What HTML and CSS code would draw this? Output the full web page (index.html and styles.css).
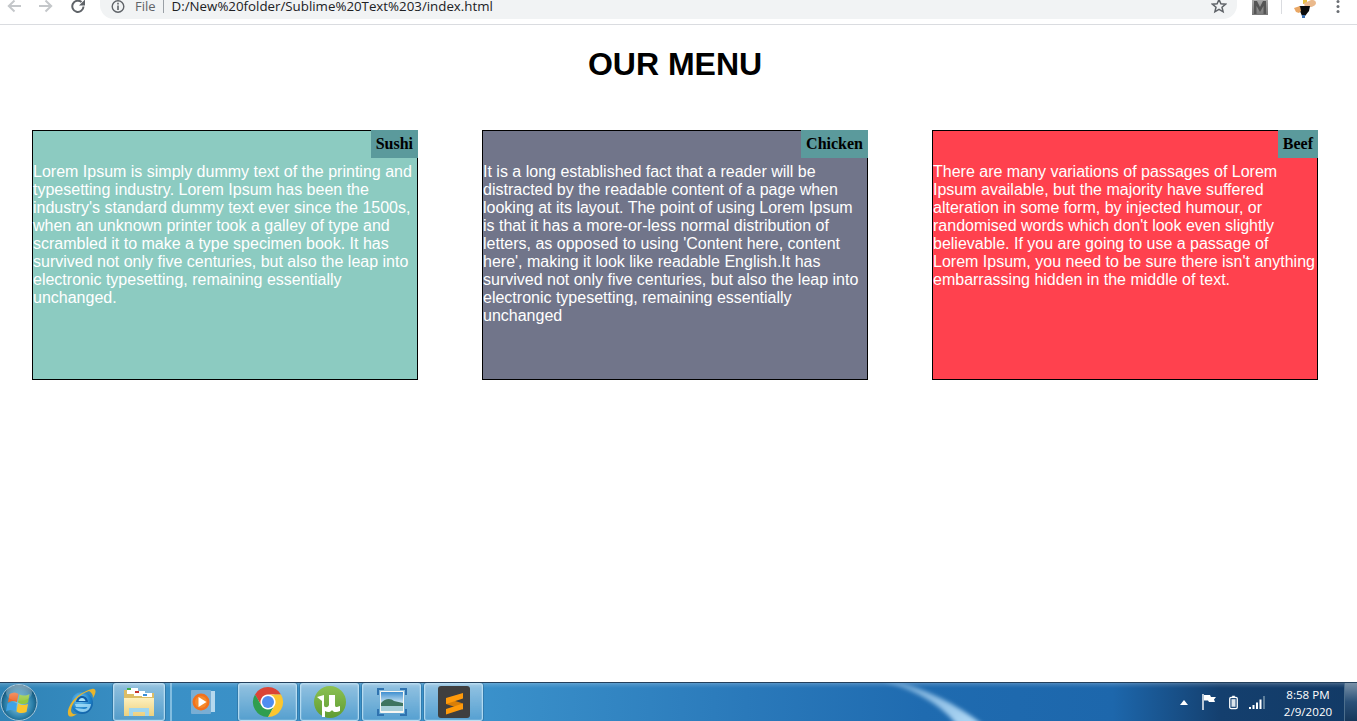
FILE: index.html
```html
<!DOCTYPE html>
<html lang="en">
<head>
<meta charset="utf-8">
<title>Our Menu</title>
<link rel="stylesheet" href="styles.css">
</head>
<body>
<div class="screen">
  <header class="toolbar">
    <div class="nav">
      <svg class="nav-icon" viewBox="0 0 16 14"><path d="M15 6H3M8.500 .5 2.800 6l5.700 5.500" fill="none" stroke="#c4c7ca" stroke-width="2"/></svg>
      <svg class="nav-icon" viewBox="0 0 16 14"><path d="M1 6h12M7.500 .5 13.200 6l-5.700 5.500" fill="none" stroke="#c4c7ca" stroke-width="2"/></svg>
      <svg class="nav-icon" viewBox="0 0 16 14"><path d="M13.500 6.500A5.600 5.600 0 1 1 11.500 2" fill="none" stroke="#5f6368" stroke-width="2"/><path d="M9 5.500h6V-.5z" fill="#5f6368"/></svg>
    </div>
    <div class="omnibox">
      <svg class="info" viewBox="0 0 14 14"><circle cx="7" cy="6.500" r="5.800" fill="none" stroke="#5f6368" stroke-width="1.400"/><path d="M6.200 5.500h1.600v4.500H6.200zM6.200 2.800h1.600v1.600H6.200z" fill="#5f6368"/></svg>
      <span class="scheme">File</span>
      <span class="divider"></span>
      <span class="url">D:/New%20folder/Sublime%20Text%203/index.html</span>
      <svg class="star" viewBox="0 0 16 16"><path d="M8 1.500l1.900 4.300 4.600.4-3.500 3 1.100 4.600L8 11.400l-4.100 2.400L5 9.200l-3.500-3 4.600-.4z" fill="none" stroke="#5f6368" stroke-width="1.500"/></svg>
    </div>
    <div class="extensions">
      <svg class="ext-m" viewBox="0 0 16 15">
        <defs><linearGradient id="mg" x1="0" y1="0" x2="0" y2="1"><stop offset="0" stop-color="#a9a9a9"/><stop offset="1" stop-color="#777"/></linearGradient></defs>
        <rect width="16" height="15" fill="url(#mg)"/><path d="M2 14V1h3l3 6 3-6h3v13h-2.500V6L8 12 4.500 6v8z" fill="#555"/>
      </svg>
      <span class="ext-sep"></span>
      <svg class="avatar" viewBox="0 0 22 18">
        <path d="M9 0h4v4H9z" fill="#e8c040"/>
        <path d="M10 3c3-1 5-2 7-3 3-.5 5 1 5 3 0 2-3 4-6 4l-5 1z" fill="#eab98c"/>
        <path d="M5 6h11l-1 5-4 5H8L6 11z" fill="#0b0b0b"/>
        <path d="M0 8l6-2 1 5-2 2-3-1z" fill="#e9a765"/>
        <path d="M8 15h3v3H8z" fill="#3a6fb0"/>
      </svg>
      <svg class="kebab" viewBox="0 0 4 14"><circle cx="2" cy="1.500" r="1.500" fill="#6a6e73"/><circle cx="2" cy="6.500" r="1.500" fill="#6a6e73"/><circle cx="2" cy="11.500" r="1.500" fill="#6a6e73"/></svg>
    </div>
  </header>

  <main class="page">
    <h1 class="title">OUR MENU</h1>
    <section class="cards">
      <article class="card card-sushi">
        <h2 class="label">Sushi</h2>
        <p class="text">Lorem Ipsum is simply dummy text of the printing and typesetting industry. Lorem Ipsum has been the industry's standard dummy text ever since the 1500s, when an unknown printer took a galley of type and scrambled it to make a type specimen book. It has survived not only five centuries, but also the leap into electronic typesetting, remaining essentially unchanged.</p>
      </article>
      <article class="card card-chicken">
        <h2 class="label">Chicken</h2>
        <p class="text">It is a long established fact that a reader will be distracted by the readable content of a page when looking at its layout. The point of using Lorem Ipsum is that it has a more-or-less normal distribution of letters, as opposed to using 'Content here, content here', making it look like readable English.It has survived not only five centuries, but also the leap into electronic typesetting, remaining essentially unchanged</p>
      </article>
      <article class="card card-beef">
        <h2 class="label">Beef</h2>
        <p class="text">There are many variations of passages of Lorem Ipsum available, but the majority have suffered alteration in some form, by injected humour, or randomised words which don't look even slightly believable. If you are going to use a passage of Lorem Ipsum, you need to be sure there isn't anything embarrassing hidden in the middle of text.</p>
      </article>
    </section>
  </main>

  <footer class="taskbar">
    <svg class="streak" viewBox="0 0 110 39">
      <defs><filter id="soft" x="-20%" y="-20%" width="140%" height="140%"><feGaussianBlur stdDeviation="2"/></filter>
      <linearGradient id="sg" x1="0" y1="0" x2="1" y2="1"><stop offset="0" stop-color="#6fa6d4"/><stop offset="1" stop-color="#b4dcf8"/></linearGradient></defs>
      <path d="M8 -2C40 4 75 22 100 42H74C60 24 36 8 0 -2z" fill="url(#sg)" filter="url(#soft)"/>
    </svg>
    <div class="orb">
      <svg viewBox="0 0 38 38" width="38" height="38">
        <defs>
          <radialGradient id="orbg" cx=".5" cy=".55" r=".55"><stop offset="0" stop-color="#8fd0ea"/><stop offset=".7" stop-color="#2a7ea8"/><stop offset="1" stop-color="#0f4a6c"/></radialGradient>
          <linearGradient id="glass" x1="0" y1="0" x2="0" y2="1"><stop offset="0" stop-color="#fff" stop-opacity=".45"/><stop offset="1" stop-color="#fff" stop-opacity=".05"/></linearGradient>
        </defs>
        <circle cx="19" cy="19.500" r="18" fill="url(#orbg)" stroke="#a9c9dc" stroke-width="1"/>
        <path d="M9.500 11c3.500-2 6.500-2 9 0l-1.500 8c-3-1.500-6-1.500-9 .5z" fill="#ee6a2c"/>
        <path d="M19.500 11.500c3 1.500 6.500 1.500 10-.5l-1.500 8.500c-3 2-7 2-10 0z" fill="#94c940"/>
        <path d="M7.500 20.500c3-2 6.500-2 9.500 0L15.500 28c-3-1.500-6.500-1.500-9.500.5z" fill="#3fa2e6"/>
        <path d="M18 20.500c3 2 6.500 2 10 .5l-1.500 8c-3.500 1.500-7 1.500-10-.5z" fill="#fbc52c"/>
        <ellipse cx="19" cy="10" rx="13" ry="8" fill="url(#glass)"/>
      </svg>
    </div>
    <div class="pin pin-ie">
      <svg viewBox="0 0 30 32" width="30" height="32">
        <defs><radialGradient id="ieg" cx=".4" cy=".35" r=".8"><stop offset="0" stop-color="#7fd0f5"/><stop offset=".6" stop-color="#1b7fc8"/><stop offset="1" stop-color="#0f4f92"/></radialGradient></defs>
        <circle cx="16" cy="17" r="11" fill="url(#ieg)"/>
        <path d="M10 16c.5-4 3-6 6-6s5.500 2 6 6z" fill="#0e5ea8"/>
        <path d="M12.500 15c.5-2 2-3 3.500-3s3 1 3.500 3z" fill="#a9e2fa"/>
        <path d="M9 18h16c-.5 5-4 8-8 8-3.500 0-6-1.500-8-4l9 1c2 0 3-1 3.500-2H10z" fill="#a9e2fa" opacity=".8"/>
        <path d="M3 30C-1 26 6 8 26 3c4-1 5 3 1 9 0-4-2-6-4-7C13 8 6 17 5 24c0 3 2 5 6 4-4 3-7 3-8 2z" fill="#e9b52c"/>
      </svg>
    </div>
    <div class="btn btn-explorer">
      <svg viewBox="0 0 32 30" width="32" height="30">
        <defs><linearGradient id="fold" x1="0" y1="0" x2="0" y2="1"><stop offset="0" stop-color="#fdf0bd"/><stop offset="1" stop-color="#ecd07f"/></linearGradient></defs>
        <path d="M1 3h12l2 3h16v23H1z" fill="#dcbd65"/>
        <rect x="4" y="1" width="11" height="6" fill="#fff"/><rect x="4" y="1" width="4" height="2" fill="#3fae4a"/>
        <rect x="11" y="4" width="11" height="5" fill="#fff"/><rect x="12" y="4" width="4" height="2" fill="#c8352b"/>
        <rect x="19" y="6" width="10" height="4" fill="#fff"/><rect x="20" y="7" width="4" height="2" fill="#3a8fd8"/>
        <path d="M1 11h30v18H1z" fill="url(#fold)"/>
        <path d="M6 29v-8h20v8h-4v-4H10v4z" fill="#9fd6ef"/>
      </svg>
    </div>
    <span class="grip"></span>
    <div class="btn btn-media">
      <svg viewBox="0 0 27 24" width="27" height="24">
        <rect x="6" y="1" width="18" height="21" fill="#b5d8ee"/>
        <rect x="0" y="0" width="20" height="24" rx="1" fill="#79aed4"/>
        <circle cx="10" cy="12" r="8.500" fill="#f2711c"/>
        <circle cx="10" cy="12" r="6" fill="#f58a2a"/>
        <path d="M7.500 7l8 5-8 5z" fill="#fff"/>
      </svg>
    </div>
    <div class="btn btn-chrome">
      <svg viewBox="0 0 32 32" width="32" height="32">
        <circle cx="16" cy="16" r="10" fill="#fff"/>
        <path d="M3 8.500A15 15 0 0 1 29 8.500H16A7.500 7.500 0 0 0 9.500 19.750z" fill="#db4437"/>
        <path d="M3 8.500A15 15 0 0 0 16 31L22.500 19.750A7.500 7.500 0 0 1 9.500 19.750z" fill="#2f9e4f"/>
        <path d="M16 31A15 15 0 0 0 29 8.500H16A7.500 7.500 0 0 1 22.500 19.750z" fill="#fbc62f"/>
        <circle cx="16" cy="16" r="6" fill="#4f8df0"/>
      </svg>
    </div>
    <div class="btn btn-torrent">
      <svg viewBox="0 0 32 32" width="32" height="32">
        <defs><linearGradient id="tg" x1="0" y1="0" x2="0" y2="1"><stop offset="0" stop-color="#8cc152"/><stop offset="1" stop-color="#5f9c33"/></linearGradient></defs>
        <circle cx="16" cy="16" r="16" fill="url(#tg)"/>
        <path d="M3 11l7-2v10c0 3 4 3 5 0V9h6v10c0 2 1 2 2 2l3-1v5c-4 2-7 1-8-1-2 3-5 2-7 1v6H8V15z" fill="#fff"/>
      </svg>
    </div>
    <div class="btn btn-photos">
      <svg viewBox="0 0 30 28" width="30" height="28">
        <defs><linearGradient id="sky" x1="0" y1="0" x2="0" y2="1"><stop offset="0" stop-color="#3f8fd0"/><stop offset="1" stop-color="#cfe7f3"/></linearGradient></defs>
        <path d="M1 7V1h6M23 1h6v6M29 21v6h-6M7 27H1v-6" fill="none" stroke="#2f73b0" stroke-width="2"/>
        <rect x="3" y="3" width="24" height="22" rx="1" fill="#f6f6f2"/>
        <rect x="4" y="4" width="22" height="11" fill="url(#sky)"/>
        <path d="M4 15c4-5 10-5 13-2 3 1 6 1 9 2v5H4z" fill="#3f7560"/>
        <rect x="4" y="18" width="22" height="5" fill="#a8cfd8"/>
      </svg>
    </div>
    <div class="btn btn-sublime">
      <svg viewBox="0 0 32 32" width="32" height="32">
        <rect width="32" height="32" rx="3" fill="#3f3f3f"/>
        <path d="M8 12l17 5.500v6L8 18z" fill="#d97f08"/>
        <path d="M25 7v5.500L8 18v-6zM25 17.500V23L8 28.500V23z" fill="#ff9a0a"/>
      </svg>
    </div>
    <div class="tray">
      <svg class="tray-arrow" viewBox="0 0 8 5"><path d="M0 5 4 0l4 5z" fill="#fff"/></svg>
      <svg class="tray-flag" viewBox="0 0 15 16"><path d="M1 0v16" stroke="#fff" stroke-width="1.400"/><path d="M2 1h6l1 2h5l-2 2.500L13 8H7L6 6.500H2z" fill="#fff"/></svg>
      <svg class="tray-batt" viewBox="0 0 10 15"><path d="M3.500 0h3v1.500h-3z" fill="#fff"/><rect x=".8" y="1.800" width="8.400" height="12.400" rx="1.500" fill="#234e7c" stroke="#fff" stroke-width="1.400"/><rect x="2.800" y="3.800" width="4.400" height="8.400" fill="#dbe4ec"/></svg>
      <svg class="tray-signal" viewBox="0 0 16 13"><path d="M0 11h2v2H0zM3.500 9h2v4h-2z" fill="#fff"/><path d="M7 6.500h2V13H7zM10.500 3.500h2V13h-2z" fill="#fff"/><path d="M14 0h2v13h-2z" fill="#5e7f9c"/></svg>
      <div class="clock"><span>8:58 PM</span><span>2/9/2020</span></div>
      <span class="show-desktop"></span>
    </div>
  </footer>
</div>
</body>
</html>
```

FILE: styles.css
```css
* { box-sizing: border-box; }
html, body { margin: 0; padding: 0; height: 100%; overflow: hidden; background: #fff; }
body { font-family: "Liberation Sans", Arial, sans-serif; }
.screen { width: 1357px; height: 721px; display: flex; flex-direction: column; }

.toolbar { height: 25px; flex: none; display: flex; align-items: flex-start; border-bottom: 1px solid #dadce0; background: #fff; overflow: hidden; }
.nav { width: 100px; padding-left: 6px; display: flex; gap: 16px; flex: none; }
.nav-icon { width: 16px; height: 14px; }
.omnibox { width: 1137px; height: 19px; flex: none; background: #f1f3f4; border-radius: 0 0 14px 14px; display: flex; align-items: flex-start; padding-left: 11px; }
.info { width: 14px; height: 14px; flex: none; }
.scheme { margin-left: 10px; font: 13px/13px "Open Sans", sans-serif; color: #5f6368; }
.divider { width: 1px; height: 13px; background: #9aa0a6; margin: 0 8px 0 7px; }
.url { font: 13.3px/13px "Open Sans", sans-serif; color: #202124; white-space: nowrap; }
.star { width: 16px; height: 16px; margin-left: auto; margin-right: 10px; margin-top: -2px; flex: none; }
.extensions { flex: 1; display: flex; align-items: flex-start; padding-left: 15px; }
.ext-m { width: 16px; height: 15px; flex: none; }
.ext-sep { width: 1px; height: 14px; background: #dadce0; margin-left: 13px; }
.avatar { width: 22px; height: 18px; margin-left: 12px; flex: none; }
.kebab { width: 4px; height: 14px; margin-left: 20px; flex: none; }

.page { flex: 1; padding: 0 39px 0 32px; }
.title { margin: 21px 0 0; font-size: 32px; line-height: 37px; font-weight: bold; text-align: center; color: #000; }
.cards { margin-top: 47px; display: flex; gap: 64px; }
.card { width: 386px; height: 250px; border: 1px solid #000; display: flex; flex-direction: column; color: #fff; }
.card-sushi { background: #8ccbc1; }
.card-chicken { background: #71758a; }
.card-beef { background: #ff414e; }
.label { align-self: flex-end; margin: -1px -1px 0 0; padding: 5px; height: 28px; background: #5b9a9c; color: #000; font: bold 16px/18px "Liberation Serif", serif; }
.text { margin: 5px 0 0; font-size: 16px; line-height: 18px; }

.taskbar { position: relative; height: 39px; flex: none; display: flex; align-items: stretch; overflow: hidden; background: linear-gradient(180deg, rgba(255,255,255,.22) 0, rgba(255,255,255,.1) 2px, rgba(255,255,255,0) 5px), linear-gradient(90deg, #2f83b6 0, #3a90c6 12%, #3b92cb 35%, #2a79ba 55%, #1f6bb0 68%, #1d67ac 82%, #143f6e 90%, #123a66 100%); border-top: 1px solid #24405c; }
.streak { position: absolute; left: 883px; top: 0; width: 110px; height: 39px; }
.orb { width: 38px; flex: none; position: relative; }
.pin { flex: none; display: flex; align-items: center; justify-content: center; position: relative; }
.pin-ie { width: 30px; margin-left: 28px; }
.btn { position: relative; flex: none; display: flex; align-items: center; justify-content: center; width: 59px; margin-left: 3px; border: 1px solid rgba(200,232,248,.75); border-radius: 3px; box-shadow: inset 0 0 0 1px rgba(255,255,255,.12), 0 0 0 1px rgba(20,60,90,.25); background: linear-gradient(180deg, rgba(255,255,255,.45), rgba(255,255,255,.14)); }
.btn-explorer { width: 52px; margin-left: 17px; }
.grip { width: 2px; margin-left: 5px; background: rgba(190,225,245,.55); position: relative; }
.btn-media { width: 62px; margin-left: 1px; background: none; border-color: transparent; box-shadow: none; }
.tray { margin-left: auto; position: relative; display: flex; align-items: center; color: #fff; }
.tray-arrow { width: 8px; height: 5px; flex: none; margin-right: 14px; }
.tray-flag { width: 15px; height: 16px; flex: none; margin-right: 12px; }
.tray-batt { width: 9px; height: 15px; flex: none; margin-right: 11px; }
.tray-signal { width: 16px; height: 13px; flex: none; margin-right: 20px; }
.clock { width: 46px; margin-right: 13px; padding-top: 1px; display: flex; flex-direction: column; align-items: center; gap: 2px; font: 11.6px/15px "Open Sans", sans-serif; white-space: nowrap; }
.show-desktop { width: 13px; height: 100%; border-left: 1px solid #4d6f8d; background: linear-gradient(180deg, #7a92a8, #2a5078 50%, #16375a); }
```
